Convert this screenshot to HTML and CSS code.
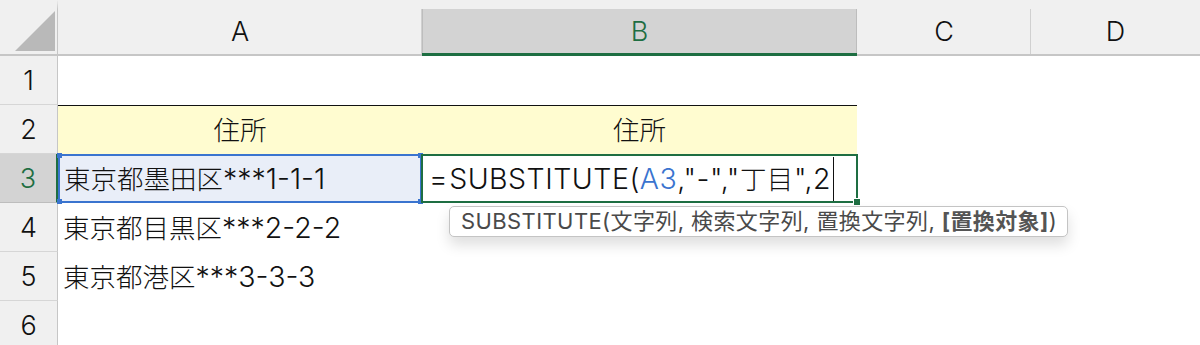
FILE: index.html
```html
<!DOCTYPE html>
<html lang="ja">
<head>
    <meta charset="UTF-8">
    <title>SUBSTITUTE</title>
    <link rel="stylesheet" href="styles.css">
</head>
<body>
    <div class="sheet">
        <!-- column headers -->
        <div class="corner">
            <svg width="58" height="47" viewBox="0 0 58 47"><polygon points="15,44 55,4 55,44" fill="#b9b9b9"/></svg>
        </div>
        <div class="col-head">A</div>
        <div class="col-head active">B</div>
        <div class="col-head">C</div>
        <div class="col-head last">D</div>

        <!-- row 1 -->
        <div class="row-head">1</div>
        <div class="cell"></div>
        <div class="cell"></div>
        <div class="cell"></div>
        <div class="cell"></div>

        <!-- row 2 -->
        <div class="row-head">2</div>
        <div class="cell title"><span class="jp">住所</span></div>
        <div class="cell title"><span class="jp">住所</span></div>
        <div class="cell"></div>
        <div class="cell"></div>

        <!-- row 3 -->
        <div class="row-head active">3</div>
        <div class="cell ref"><span class="jp">東京都墨田区</span>***1-1-1<span class="handle tl"></span><span class="handle tr"></span><span class="handle bl"></span><span class="handle br"></span></div>
        <div class="cell editing"><span class="eq">=</span>SUBSTITUTE(<span class="ref-text">A3</span>,"-","<span class="jp">丁目</span>",2<span class="caret"></span><span class="fill-handle"></span>
            <div class="tooltip">SUBSTITUTE(文字列, 検索文字列, 置換文字列, <b>[置換対象]</b>)</div>
        </div>
        <div class="cell"></div>
        <div class="cell"></div>

        <!-- row 4 -->
        <div class="row-head">4</div>
        <div class="cell"><span class="jp">東京都目黒区</span>***2-2-2</div>
        <div class="cell"></div>
        <div class="cell"></div>
        <div class="cell"></div>

        <!-- row 5 -->
        <div class="row-head">5</div>
        <div class="cell"><span class="jp">東京都港区</span>***3-3-3</div>
        <div class="cell"></div>
        <div class="cell"></div>
        <div class="cell"></div>

        <!-- row 6 -->
        <div class="row-head">6</div>
        <div class="cell"></div>
        <div class="cell"></div>
        <div class="cell"></div>
        <div class="cell"></div>
    </div>
</body>
</html>
```

FILE: styles.css
```css
body {
    margin: 0;
    background: #fff;
    font-family: Inter, "Noto Sans CJK JP", sans-serif;
    color: #111;
    overflow: hidden;
}

.sheet {
    display: grid;
    grid-template-columns: 58px 364px 435px 174px 169px;
    grid-template-rows: 56px repeat(6, 49px);
    background: #fff;
}

.corner,
.col-head {
    background: #f0f0f0;
    border-top: 9px solid #f0f0f0;
    border-bottom: 2px solid #c6c6c6;
    box-sizing: border-box;
}

.corner {
    border-right: 1px solid #c6c6c6;
}

.corner svg {
    display: block;
    margin-top: -2px;
}

.col-head {
    display: flex;
    justify-content: center;
    align-items: center;
    font-size: 27px;
    font-weight: 300;
    box-shadow: inset -1px 0 0 #d0d0d0;
}

.col-head.last {
    box-shadow: none;
}

.col-head.active {
    background: #d3d3d3;
    border-top-color: #f0f0f0;
    border-bottom: 3px solid #1e6e42;
    color: #1e6e42;
    box-shadow: inset -1px 0 0 #bdbdbd, inset 1px 0 0 #bdbdbd;
}

.row-head {
    background: #f0f0f0;
    display: flex;
    justify-content: center;
    align-items: center;
    font-size: 27px;
    font-weight: 300;
    border-right: 1px solid #c6c6c6;
    border-bottom: 1px solid #d6d6d6;
    box-sizing: border-box;
}

.row-head.active {
    background: #d3d3d3;
    color: #1e6e42;
    border-right: 2px solid #1e6e42;
    border-bottom-color: #bdbdbd;
}

.cell {
    position: relative;
    display: flex;
    align-items: baseline;
    padding: 8px 0 0 5px;
    font-size: 28.5px;
    font-weight: 300;
    line-height: 32px;
    white-space: nowrap;
    box-sizing: border-box;
}

.jp {
    font-family: "Noto Sans CJK JP", sans-serif;
    font-size: 26.5px;
    font-weight: 300;
}

.cell.title {
    background: #fffcd0;
    border-top: 1px solid #111;
    justify-content: center;
    padding-left: 0;
    padding-top: 7px;
}

.cell.ref {
    background: #e9eef8;
    border: 2px solid #3a74cf;
    padding: 6px 0 0 4px;
}

.handle {
    position: absolute;
    width: 5px;
    height: 5px;
    background: #3a74cf;
}

.handle.tl { top: -3px; left: -3px; }
.handle.tr { top: -3px; right: -3px; }
.handle.bl { bottom: -3px; left: -3px; }
.handle.br { bottom: -3px; right: -3px; }

.cell.editing {
    border: 2px solid #1e6e42;
    padding: 6px 0 0 6px;
    margin-left: -1px;
    margin-right: -1px;
    letter-spacing: 0.5px;
}

.eq {
    margin-right: 1px;
}

.ref-text {
    color: #3a74cf;
}

.caret {
    align-self: center;
    display: inline-block;
    width: 1px;
    height: 44px;
    margin: -6px 0 0 2px;
    background: #111;
}

.fill-handle {
    position: absolute;
    right: -5px;
    bottom: -5px;
    width: 6px;
    height: 6px;
    background: #1e6e42;
    border: 1px solid #fff;
}

.tooltip {
    position: absolute;
    top: 50px;
    left: 26px;
    z-index: 5;
    padding: 0 10px 0 11px;
    background: #fff;
    border: 1px solid #c4c4c4;
    border-radius: 5px;
    box-shadow: 0 8px 14px rgba(0, 0, 0, 0.13);
    font-family: Inter, "Noto Sans CJK JP", sans-serif;
    font-size: 22px;
    font-weight: 400;
    letter-spacing: 0.4px;
    color: #4a4a4a;
    line-height: 29px;
}

.tooltip b {
    font-weight: 700;
    color: #555;
}
```
